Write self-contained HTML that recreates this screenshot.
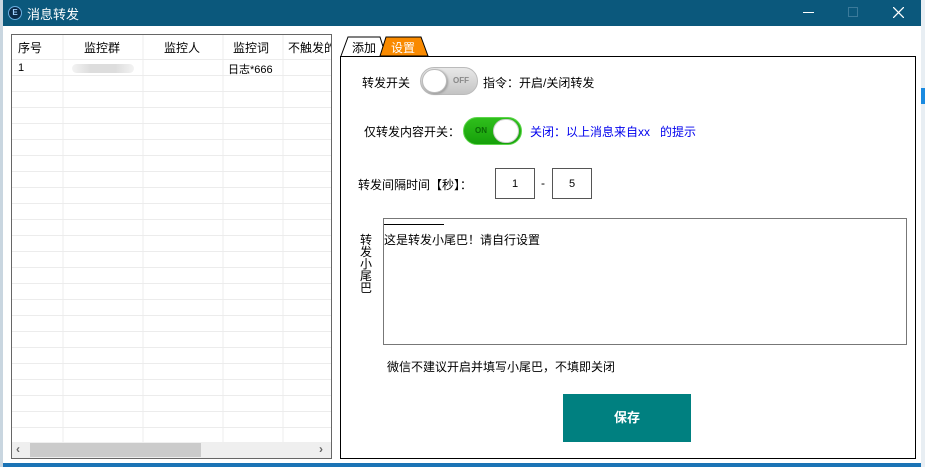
<!DOCTYPE html>
<html><head><meta charset="utf-8"><style>
*{margin:0;padding:0;box-sizing:border-box}
body{width:925px;height:467px;position:relative;overflow:hidden;background:#fff;font-family:"Liberation Sans","Noto Sans CJK SC",sans-serif;font-size:12px;color:#000}
.a{position:absolute}
.t{white-space:nowrap}
</style></head><body>
<div class="a" style="left:0;top:0;width:3px;height:467px;background:#c9d6e0"></div>
<div class="a" style="left:921px;top:0;width:4px;height:467px;background:#e8eef3"></div>
<div class="a" style="left:921px;top:88px;width:4px;height:16px;background:#1a8ae0"></div>
<div class="a" style="left:3px;top:463px;width:918px;height:4px;background:#1b73b5"></div>
<div class="a" style="left:3px;top:0;width:918px;height:26px;background:#0b587c"></div>
<div class="a" style="left:8px;top:6px;width:14px;height:14px;border-radius:50%;background:#0a2a48;border:1px solid #6aaee0;color:#9fd0ff;font-size:8px;font-weight:bold;text-align:center;line-height:12px">E</div>
<div class="a t" style="left:27px;top:4px;color:#fff;font-size:13px">消息转发</div>
<div class="a" style="left:803px;top:12px;width:11px;height:1px;background:#fff"></div>
<div class="a" style="left:848px;top:7px;width:10px;height:10px;border:1px solid #3b7a9a"></div>
<svg class="a" style="left:893px;top:7px" width="11" height="11"><path d="M0 0L11 11M11 0L0 11" stroke="#fff" stroke-width="1.3"/></svg>

<!-- grid -->
<div class="a" style="left:11px;top:34px;width:321px;height:425px;border:1px solid #666;background:#fff;overflow:hidden">
<svg width="321" height="425" style="position:absolute;left:0;top:0">
<g stroke="#ececec" stroke-width="1">
<path d="M51 0V407M131 0V407M211 0V407M271 0V407"/>
<path d="M0 40.5H320M0 56.5H320M0 72.5H320M0 88.5H320M0 104.5H320M0 120.5H320M0 136.5H320M0 152.5H320M0 168.5H320M0 184.5H320M0 200.5H320M0 216.5H320M0 232.5H320M0 248.5H320M0 264.5H320M0 280.5H320M0 296.5H320M0 312.5H320M0 328.5H320M0 344.5H320M0 360.5H320M0 376.5H320M0 392.5H320"/>
<path d="M0 24.5H320"/>
</g></svg>
<div class="a t" style="left:6px;top:4px;font-size:12px">序号</div>
<div class="a t" style="left:72px;top:4px">监控群</div>
<div class="a t" style="left:152px;top:4px">监控人</div>
<div class="a t" style="left:221px;top:4px">监控词</div>
<div class="a t" style="left:276px;top:4px">不触发的</div>
<div class="a t" style="left:6px;top:27px;font-size:11px">1</div>
<div class="a" style="left:60px;top:29px;width:62px;height:9px;border-radius:5px;background:linear-gradient(90deg,#f3f3f3,#ddd 30%,#ddd 70%,#f3f3f3)"></div>
<div class="a t" style="left:216px;top:26px;font-size:11px">日志*666</div>
<div class="a" style="left:0;top:407px;width:319px;height:16px;background:#efefef"></div>
<div class="a" style="left:18px;top:408px;width:171px;height:14px;background:#cbcbcb"></div>
<div class="a t" style="left:4px;top:407px;color:#666;font-weight:bold;font-size:12px">‹</div>
<div class="a t" style="left:307px;top:407px;color:#666;font-weight:bold;font-size:12px">›</div>
</div>

<!-- tabs -->
<svg class="a" style="left:340px;top:36px" width="92" height="22">
<path d="M1 20L8 1H40L46 20" fill="#fff" stroke="#000"/>
<path d="M40 20L46 1H81L88 20Z" fill="#f98a00" stroke="#000"/>
</svg>
<div class="a t" style="left:352px;top:39px">添加</div>
<div class="a t" style="left:391px;top:39px;color:#fff">设置</div>

<div class="a" style="left:340px;top:56px;width:576px;height:403px;border:1px solid #000;border-top-width:1px"></div>

<div class="a t" style="left:362px;top:74px">转发开关</div>
<div class="a" style="left:420px;top:67px;width:58px;height:28px;border-radius:14px;background:linear-gradient(#e8e8e8,#c4c4c4);border:1px solid #bbb"></div>
<div class="a" style="left:422px;top:69px;width:25px;height:24px;border-radius:12px;background:#fff;border:1px solid #bbb;box-shadow:1px 1px 2px #999"></div>
<div class="a t" style="left:453px;top:76px;font-size:8px;color:#888;font-weight:bold">OFF</div>
<div class="a t" style="left:483px;top:74px">指令：开启/关闭转发</div>

<div class="a t" style="left:364px;top:123px">仅转发内容开关：</div>
<div class="a" style="left:463px;top:117px;width:59px;height:28px;border-radius:14px;background:linear-gradient(#2fbf1c,#16a00a);border:1px solid #5cd64a"></div>
<div class="a" style="left:493px;top:119px;width:26px;height:24px;border-radius:12px;background:#fff;border:1px solid #ccc"></div>
<div class="a t" style="left:475px;top:126px;font-size:8px;color:#0a6a05;font-weight:bold">ON</div>
<div class="a t" style="left:530px;top:123px;color:#0000ee">关闭：以上消息来自xx&nbsp;&nbsp;&nbsp;的提示</div>

<div class="a t" style="left:358px;top:176px">转发间隔时间【秒】：</div>
<div class="a" style="left:495px;top:168px;width:40px;height:31px;border:1px solid #555;text-align:center;line-height:30px;font-size:11px">1</div>
<div class="a t" style="left:541px;top:176px">-</div>
<div class="a" style="left:552px;top:168px;width:40px;height:31px;border:1px solid #555;text-align:center;line-height:30px;font-size:11px">5</div>

<div class="a" style="left:360px;top:234px;width:12px;font-size:12px;line-height:12px">转发小尾巴</div>
<div class="a" style="left:383px;top:218px;width:524px;height:127px;border:1px solid #777"></div>
<div class="a" style="left:384px;top:224px;width:60px;height:1px;background:#000"></div>
<div class="a t" style="left:384px;top:231px">这是转发小尾巴！请自行设置</div>

<div class="a t" style="left:387px;top:358px">微信不建议开启并填写小尾巴，不填即关闭</div>
<div class="a" style="left:563px;top:394px;width:128px;height:48px;background:#008080;color:#fff;font-weight:bold;font-size:13px;text-align:center;line-height:48px">保存</div>
</body></html>
